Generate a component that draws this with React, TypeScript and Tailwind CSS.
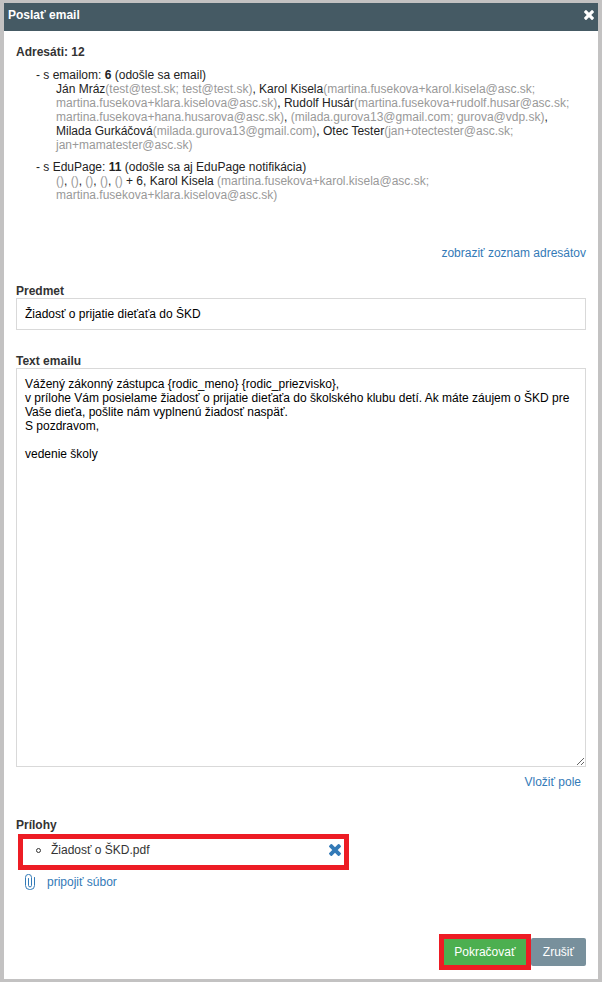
import { useState } from "react";

const initialText = `Vážený zákonný zástupca {rodic_meno} {rodic_priezvisko},
v prílohe Vám posielame žiadosť o prijatie dieťaťa do školského klubu detí. Ak máte záujem o ŠKD pre Vaše dieťa, pošlite nám vyplnenú žiadosť naspäť.
S pozdravom,

vedenie školy`;

const emailRecipients = [
  { name: "Ján Mráz", emails: "test@test.sk; test@test.sk" },
  { name: "Karol Kisela", emails: "martina.fusekova+karol.kisela@asc.sk; martina.fusekova+klara.kiselova@asc.sk" },
  { name: "Rudolf Husár", emails: "martina.fusekova+rudolf.husar@asc.sk; martina.fusekova+hana.husarova@asc.sk" },
  { name: "", emails: "milada.gurova13@gmail.com; gurova@vdp.sk" },
  { name: "Milada Gurkáčová", emails: "milada.gurova13@gmail.com" },
  { name: "Otec Tester", emails: "jan+otectester@asc.sk; jan+mamatester@asc.sk" },
];

export default function App() {
  const [subject, setSubject] = useState("Žiadosť o prijatie dieťaťa do ŠKD");
  const [text, setText] = useState(initialText);
  const [files, setFiles] = useState(["Žiadosť o ŠKD.pdf"]);

  return (
    <div className="min-h-screen bg-[#c3c2c2] px-1 py-[3px] font-['Liberation_Sans',Arial,sans-serif] text-[12px] leading-[14px] text-[#222]">
      <div className="bg-white">
        <header className="flex h-7 items-center justify-between bg-[#455a64] px-1 pb-1 text-white">
          <h1 className="font-bold">Poslať email</h1>
          <button type="button" aria-label="Zavrieť" className="cursor-pointer">
            <TimesIcon className="h-[10px] w-[10px]" />
          </button>
        </header>

        <form className="px-3 pt-[14px] pb-[13px]" onSubmit={(e) => e.preventDefault()}>
          <h2 className="font-bold text-[#333]">Adresáti: 12</h2>

          <div className="mt-[9px] pl-5">
            <p>
              - s emailom: <b>6</b> (odošle sa email)
            </p>
            <p className="pl-5">
              {emailRecipients.map((r, i) => (
                <span key={i}>
                  {r.name}
                  <Muted>({r.emails})</Muted>
                  {i < emailRecipients.length - 1 && ", "}
                </span>
              ))}
            </p>
          </div>

          <div className="mt-2 pl-5">
            <p>
              - s EduPage: <b>11</b> (odošle sa aj EduPage notifikácia)
            </p>
            <p className="pl-5">
              <Muted>()</Muted>, <Muted>()</Muted>, <Muted>()</Muted>, <Muted>()</Muted>, <Muted>()</Muted> + 6, Karol
              Kisela <Muted>(martina.fusekova+karol.kisela@asc.sk; martina.fusekova+klara.kiselova@asc.sk)</Muted>
            </p>
          </div>

          <div className="mt-11 flex justify-end">
            <a href="#adresati" className="text-[#337ab7]">
              zobraziť zoznam adresátov
            </a>
          </div>

          <label htmlFor="subject" className="mt-6 block font-bold text-[#333]">
            Predmet
          </label>
          <input
            id="subject"
            type="text"
            value={subject}
            onChange={(e) => setSubject(e.target.value)}
            className="block h-8 w-full border border-[#d9d9d9] px-2 text-black outline-none"
          />

          <label htmlFor="text" className="mt-6 block font-bold text-[#333]">
            Text emailu
          </label>
          <textarea
            id="text"
            value={text}
            onChange={(e) => setText(e.target.value)}
            className="block h-[399px] w-full border border-[#d9d9d9] p-2 text-black outline-none"
          />

          <div className="mt-2 flex justify-end pr-[5px]">
            <a href="#pole" className="text-[#337ab7]">
              Vložiť pole
            </a>
          </div>

          <h2 className="mt-[29px] font-bold text-[#333]">Prílohy</h2>
          <ul className="mt-[2px] ml-[2px] h-9 w-[331px] border-5 border-[#ed1c24] pt-1 pr-[3px] pl-[13px]">
            {files.map((file) => (
              <li key={file} className="flex items-center text-[#333]">
                <span className="mr-[10px] h-[5px] w-[5px] rounded-full border border-[#333]" />
                <span className="flex-1">{file}</span>
                <button
                  type="button"
                  aria-label={`Odstrániť ${file}`}
                  onClick={() => setFiles(files.filter((f) => f !== file))}
                  className="cursor-pointer text-[#337ab7]"
                >
                  <TimesIcon className="h-3 w-3" />
                </button>
              </li>
            ))}
          </ul>
          <a href="#pripojit" className="mt-1 ml-[9px] flex h-4 w-fit items-center gap-3 text-[#337ab7]">
            <ClipIcon />
            pripojiť súbor
          </a>

          <div className="mt-12 flex h-7 items-center justify-end">
            <button
              type="submit"
              className="h-9 w-[92px] cursor-pointer border-5 border-[#ed1c24] bg-[#4caf50] text-white"
            >
              Pokračovať
            </button>
            <button type="button" className="h-7 cursor-pointer rounded-[2px] bg-[#78909c] px-3 text-white">
              Zrušiť
            </button>
          </div>
        </form>
      </div>
    </div>
  );
}

function Muted({ children }: any) {
  return <span className="text-[#999]">{children}</span>;
}

function TimesIcon({ className }: { className: string }) {
  return (
    <svg viewBox="302 366 1188 1188" fill="currentColor" className={className}>
      <path d="M1490 1322q0 40-28 68l-136 136q-28 28-68 28t-68-28l-294-294-294 294q-28 28-68 28t-68-28l-136-136q-28-28-28-68t28-68l294-294-294-294q-28-28-28-68t28-68l136-136q28-28 68-28t68 28l294 294 294-294q28-28 68-28t68 28l136 136q28 28 28 68t-28 68l-294 294 294 294q28 28 28 68z" />
    </svg>
  );
}

function ClipIcon() {
  return (
    <svg viewBox="0 0 10 16" fill="none" stroke="currentColor" strokeLinecap="round" className="h-4 w-[10px]">
      <path d="M9.5 3.5v8a4 4 0 0 1-4 4h-1a4 4 0 0 1-4-4V3.4a3 3 0 0 1 6 0v8a1.5 1.5 0 0 1-3 0V4.5" />
    </svg>
  );
}
